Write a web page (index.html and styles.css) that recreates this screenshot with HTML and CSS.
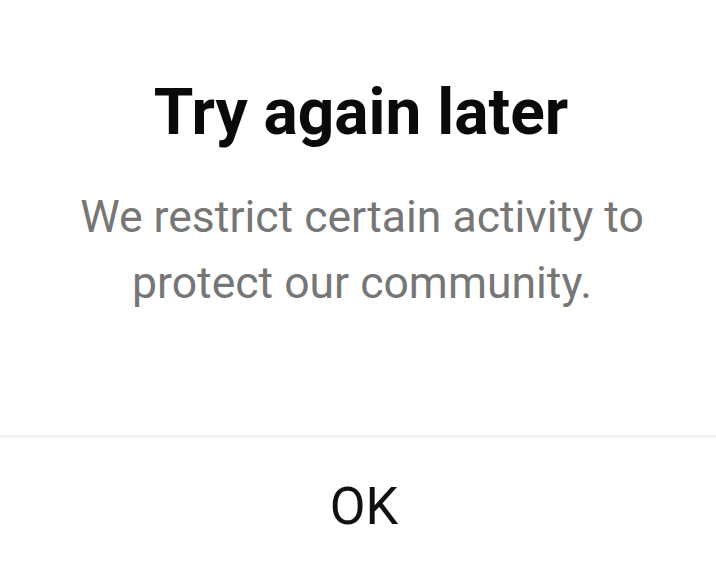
FILE: index.html
```html
<!DOCTYPE html>
<html>
<head>
<meta charset="utf-8">
<link rel="stylesheet" href="styles.css">
</head>
<body>
<div class="dialog">
  <div class="content">
    <h1 class="title">Try again later</h1>
    <p class="message">We restrict certain activity to protect our community.</p>
  </div>
  <div class="divider"></div>
  <button class="ok">OK</button>
</div>
</body>
</html>
```
FILE: styles.css
```css
html, body {
  margin: 0;
  padding: 0;
  background: #ffffff;
}
.dialog {
  width: 716px;
  height: 568px;
  display: flex;
  flex-direction: column;
  font-family: Roboto, "Liberation Sans", sans-serif;
}
.content {
  height: 435px;
  box-sizing: border-box;
  padding: 73px 20px 0;
  display: flex;
  flex-direction: column;
  align-items: center;
}
.title {
  margin: 0 0 0 6px;
  font-size: 64px;
  line-height: 80px;
  font-weight: 700;
  color: #0a0a0a;
  text-align: center;
}
.message {
  margin: 31px 0 0 8px;
  width: 640px;
  font-size: 44.5px;
  line-height: 66px;
  font-weight: 400;
  color: #767676;
  text-align: center;
}
.divider {
  height: 3px;
  background: #f2f2f2;
}
.ok {
  flex: 1;
  border: none;
  background: transparent;
  padding: 8px 0 0 12px;
  font-family: Roboto, "Liberation Sans", sans-serif;
  font-size: 52px;
  line-height: 60px;
  color: #111111;
}
```
